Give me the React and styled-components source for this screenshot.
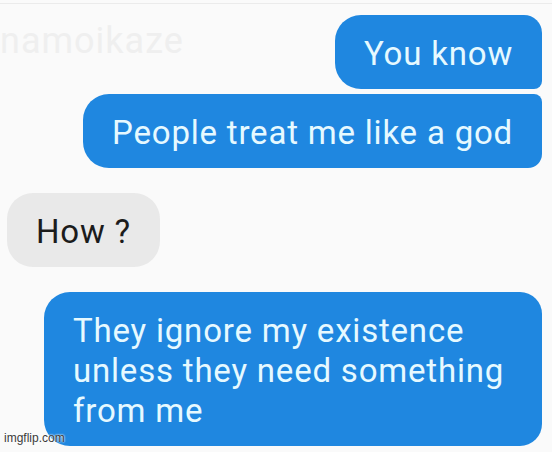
import React from 'react'
import styled, { createGlobalStyle } from 'styled-components'

const Global = createGlobalStyle`
    html, body {
        margin:0;
        padding:0;
        background:#fafafa;
    }
`

const Screen = styled.div`
    position:relative;
    width:552px;
    height:452px;
    overflow:hidden;
    background:#fafafa;
    display:flex;
    flex-direction:column;
    font-family:Roboto, "Liberation Sans", sans-serif;
`

const TopRule = styled.div`
    margin-top:3px;
    height:1px;
    background:#ebebeb;
`

const Thread = styled.div`
    display:flex;
    flex-direction:column;
    padding:11px 10px 0 7px;
`

const Bubble = styled.div`
    align-self:${p => p.mine ? 'flex-end' : 'flex-start'};
    margin-top:${p => p.gap}px;
    box-sizing:border-box;
    width:${p => p.wide ? '498px' : 'auto'};
    padding:19px 29px 15px 29px;
    font-size:33px;
    line-height:40px;
    letter-spacing:0.8px;
    color:${p => p.mine ? '#e6f9ff' : '#1c1c1c'};
    background:${p => p.mine ? '#1f87e0' : '#e9e9e9'};
    border-radius:${p => p.corners};
`

const Watermark = styled.div`
    position:absolute;
    left:0;
    top:20px;
    font-size:36px;
    letter-spacing:1px;
    color:#efefef;
`

const Credit = styled.div`
    position:absolute;
    left:4px;
    bottom:7px;
    font-size:12px;
    color:#3a3a3a;
    font-family:"Liberation Sans", Arial, sans-serif;
    text-shadow:0 0 2px #fff, 0 0 2px #fff;
`

export default function App(){
    return (
        <Screen>
            <Global/>
            <TopRule/>
            <Watermark>namoikaze</Watermark>
            <Thread>
                <Bubble mine gap={0} corners="26px 18px 8px 26px">You know</Bubble>
                <Bubble mine gap={5} corners="26px 8px 14px 26px">People treat me like a god</Bubble>
                <Bubble gap={25} corners="26px">How ?</Bubble>
                <Bubble mine wide gap={25} corners="26px 22px 22px 26px">
                    They ignore my existence<br/>unless they need something<br/>from me
                </Bubble>
            </Thread>
            <Credit>imgflip.com</Credit>
        </Screen>
    )
}
